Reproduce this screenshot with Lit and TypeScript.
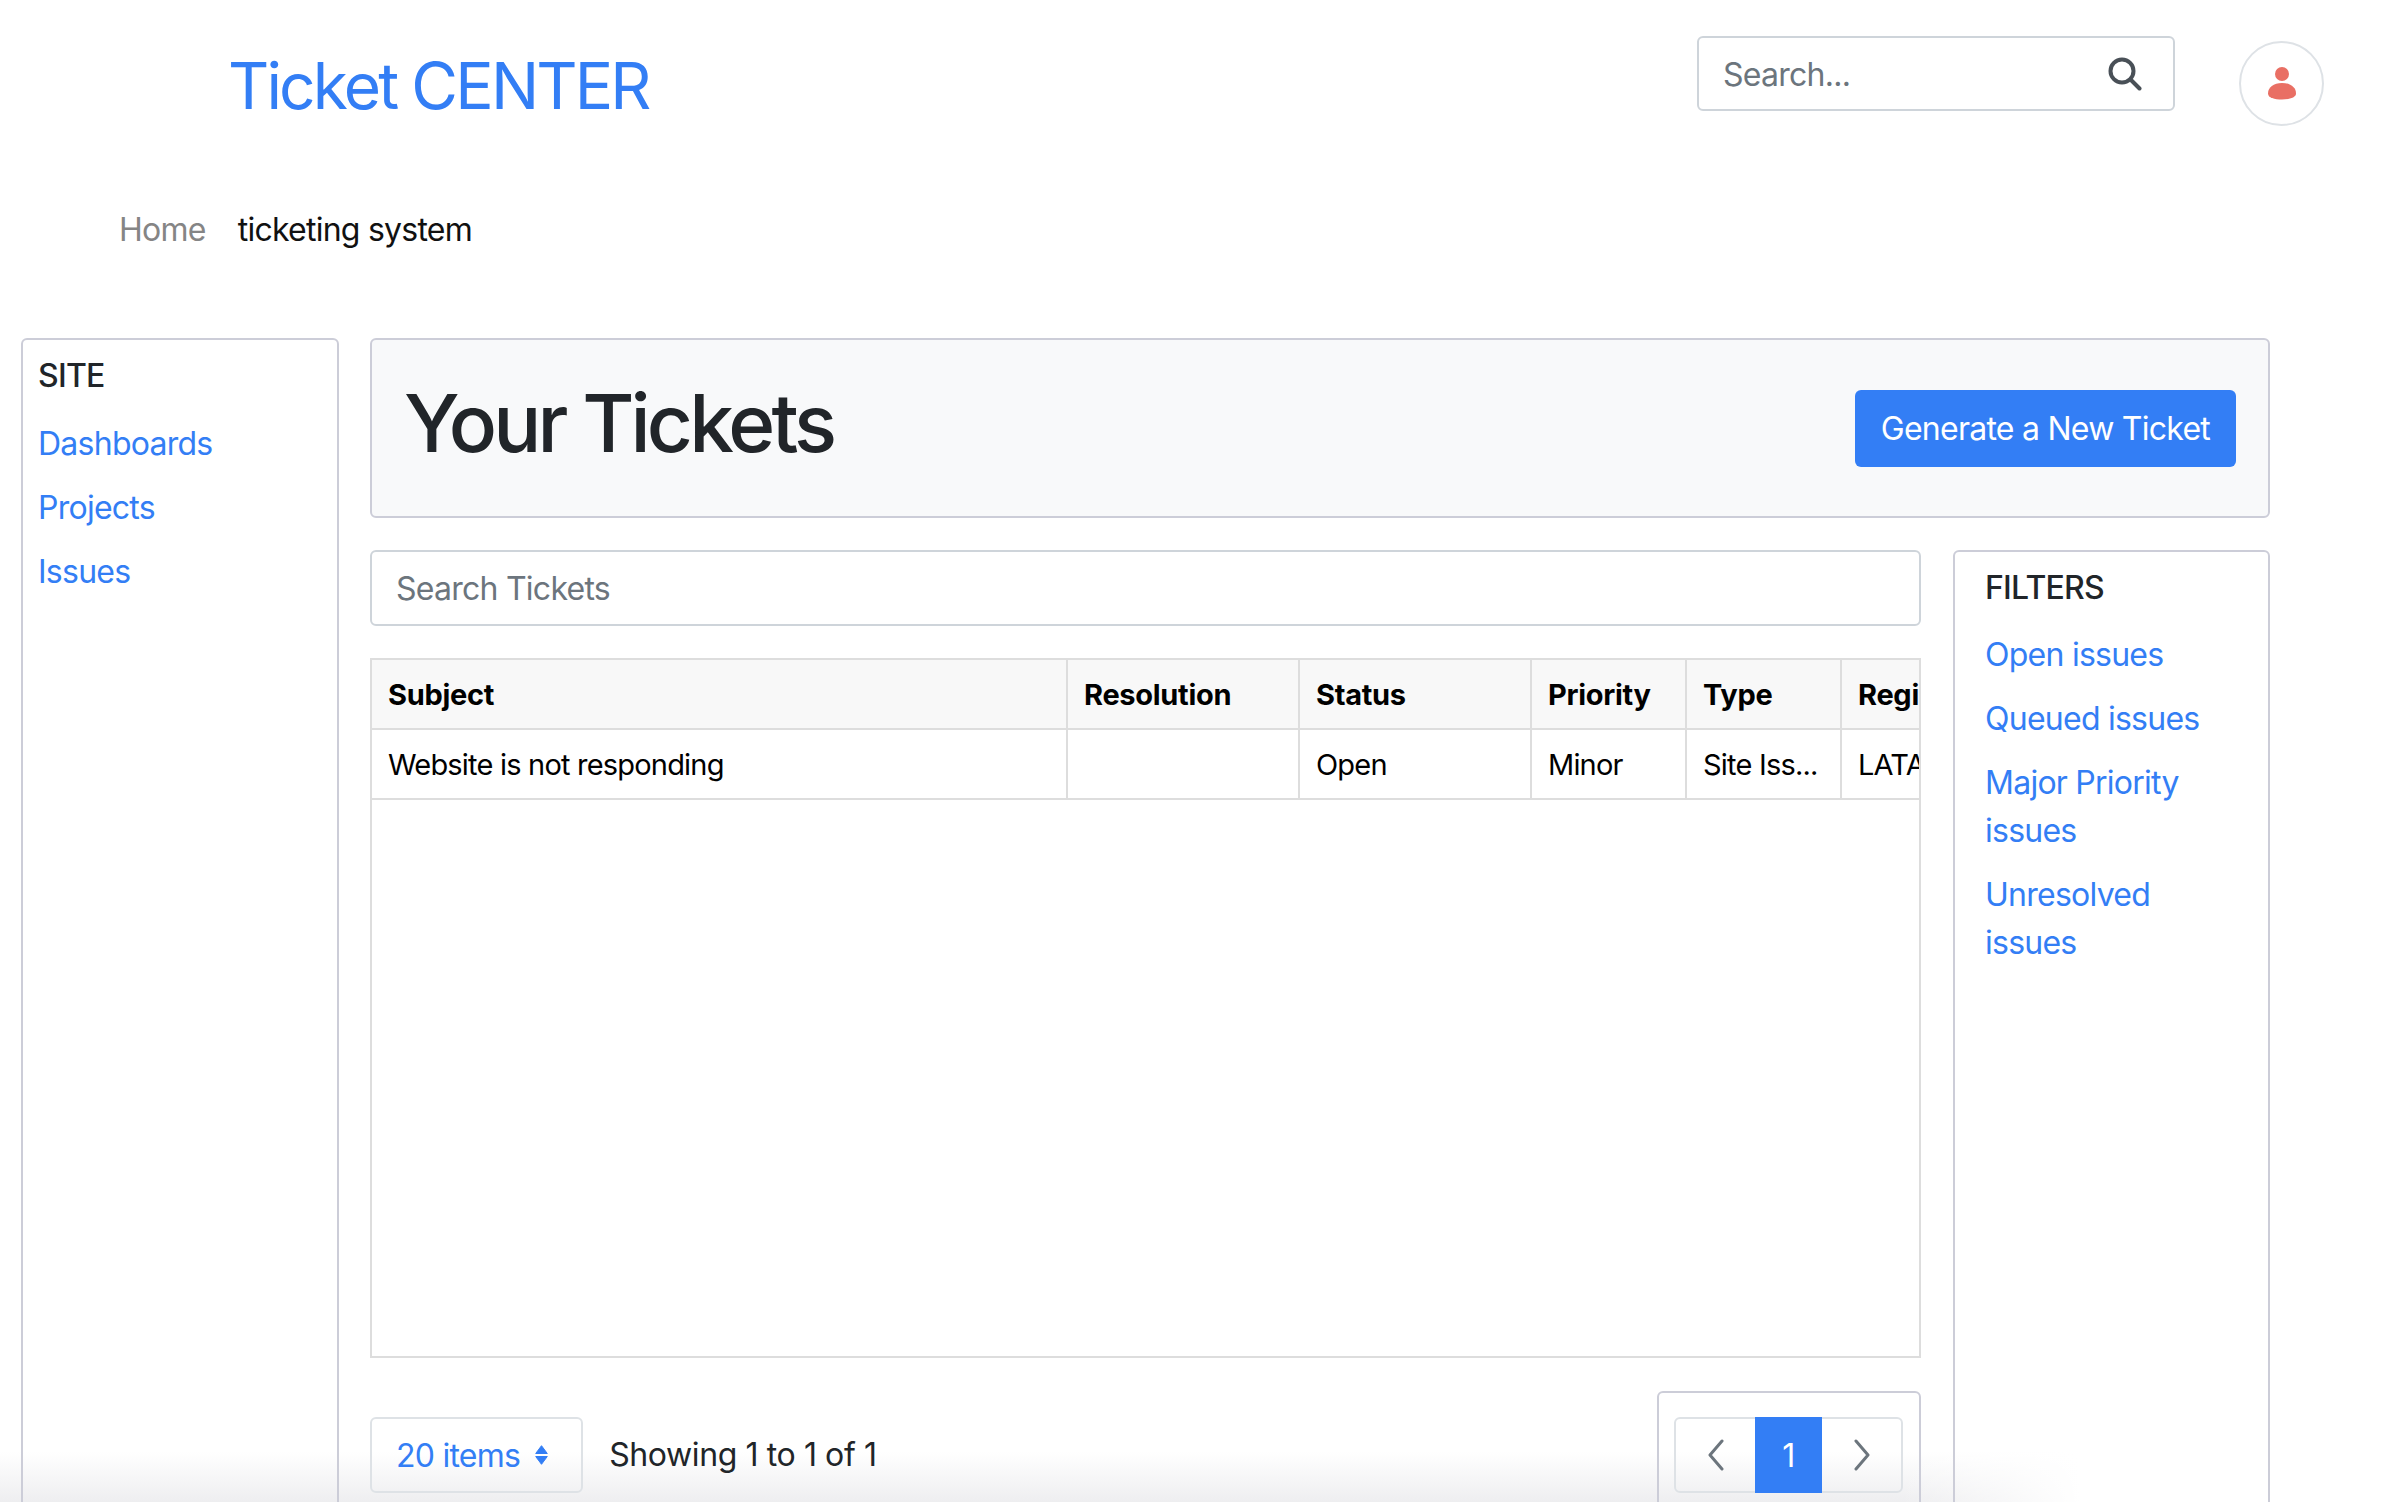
import {LitElement, html, css} from 'lit';
import {customElement} from 'lit/decorators.js';

const COLUMNS = [
  {label: 'Subject', value: 'Website is not responding', width: 696},
  {label: 'Resolution', value: '', width: 232},
  {label: 'Status', value: 'Open', width: 232},
  {label: 'Priority', value: 'Minor', width: 155},
  {label: 'Type', value: 'Site Iss...', width: 155},
  {label: 'Region', value: 'LATAM', width: 155},
];

@customElement('app-root')
class AppRoot extends LitElement {
  static styles = css`
    :host {
      display: block;
      height: 1502px;
      overflow: hidden;
      /* faint shadow along the bottom, behind the content, gone towards the right */
      background:
        linear-gradient(90deg, rgba(255, 255, 255, 0) 1900px, #fff 2080px) bottom / 100% 50px no-repeat,
        linear-gradient(rgba(238, 238, 240, 0), #eeeef0) bottom / 100% 50px no-repeat,
        #fff;
      color: #212529;
      font-family: Inter, "Noto Sans", sans-serif;
      font-size: 32px;
      letter-spacing: -0.75px;
    }

    a {
      color: #337ef5;
      text-decoration: none;
    }

    .top {
      display: flex;
      align-items: flex-start;
      height: 338px;
      box-sizing: border-box;
    }

    .head-left {
      flex: 1;
    }

    .brand {
      display: block;
      margin: 46px 0 0 228px;
      font-size: 64px;
      line-height: 80px;
      letter-spacing: -2.85px;
    }

    .crumbs {
      display: flex;
      gap: 32px;
      margin: 82px 0 0 119px;
      line-height: 43px;
      color: #111;
    }

    .crumbs span:first-child {
      color: #858585;
    }

    .site-search {
      display: flex;
      align-items: center;
      justify-content: space-between;
      box-sizing: border-box;
      width: 478px;
      height: 75px;
      margin: 36px 64px 0 0;
      padding: 2px 31px 0 24px;
      border: 2px solid #ced4da;
      border-radius: 6px;
      color: #6c757d;
    }

    .site-search svg {
      margin-top: -2px;
    }

    .avatar {
      display: flex;
      align-items: center;
      justify-content: center;
      box-sizing: border-box;
      width: 85px;
      height: 85px;
      margin: 41px 80px 0 0;
      border: 2px solid #dee2e6;
      border-radius: 50%;
    }

    .body {
      display: flex;
      gap: 31px;
      padding: 0 134px 0 21px;
    }

    .card {
      box-sizing: border-box;
      border: 2px solid #cccdd8;
      border-radius: 6px;
    }

    .side {
      width: 318px;
      flex: none;
      height: 1300px;
      padding: 16px 15px;
    }

    .side h2,
    .filters h2 {
      margin: 0;
      font-size: 32px;
      font-weight: 500;
      line-height: 40px;
    }

    .side nav,
    .filters nav {
      display: flex;
      flex-direction: column;
      gap: 16px;
      margin-top: 23px;
      line-height: 48px;
    }

    .side nav {
      margin-top: 24px;
    }

    .content {
      flex: 1;
      min-width: 0;
    }

    .title-card {
      display: flex;
      align-items: center;
      justify-content: space-between;
      height: 180px;
      padding: 0 32px;
      background: #f8f9fa;
    }

    h1 {
      margin: 0 0 10px;
      font-size: 80px;
      font-weight: 500;
      letter-spacing: -3.85px;
      line-height: 96px;
    }

    .primary {
      box-sizing: border-box;
      height: 77px;
      margin-top: 0;
      padding: 0 26px;
      border: 0;
      border-radius: 6px;
      background: #337ef5;
      color: #fff;
      font: inherit;
      letter-spacing: inherit;
    }

    .lower {
      display: flex;
      gap: 32px;
      margin-top: 32px;
    }

    .tickets {
      width: 1551px;
      flex: none;
    }

    .ticket-search {
      box-sizing: border-box;
      height: 76px;
      padding: 0 24px;
      line-height: 74px;
      border: 2px solid #ced4da;
      border-radius: 6px;
      color: #6c757d;
    }

    .grid {
      box-sizing: border-box;
      height: 700px;
      margin-top: 32px;
      border: 2px solid #dddddd;
      overflow: hidden;
      background: #fff;
    }

    .grid-row {
      display: flex;
      height: 70px;
      box-sizing: border-box;
      border-bottom: 2px solid #dddddd;
      color: #000;
      font-size: 29px;
      letter-spacing: -0.8px;
    }

    .grid-row.header {
      background: #f8f8f8;
      font-weight: 700;
      letter-spacing: -0.3px;
    }

    .cell {
      flex: none;
      box-sizing: border-box;
      padding: 0 16px;
      line-height: 70px;
      white-space: nowrap;
      overflow: hidden;
      border-right: 2px solid #dddddd;
    }

    .cell:last-child {
      border-right: 0;
    }

    .footer {
      display: flex;
      align-items: flex-start;
      margin-top: 33px;
    }

    .per-page {
      display: flex;
      align-items: center;
      gap: 15px;
      box-sizing: border-box;
      height: 76px;
      margin-top: 26px;
      padding: 0 33px 0 24px;
      border: 2px solid #dee2e6;
      border-radius: 6px;
      color: #337ef5;
    }

    .showing {
      margin: 26px 0 0 26px;
      line-height: 76px;
      letter-spacing: -0.4px;
      flex: 1;
    }

    .pager-wrap {
      padding: 24px 16px 24px 15px;
    }

    .pager {
      display: flex;
      height: 76px;
      box-sizing: border-box;
      border: 2px solid #dee2e6;
      border-radius: 6px;
    }

    .pager div {
      display: flex;
      align-items: center;
      justify-content: center;
      width: 79px;
      color: #6c757d;
    }

    .pager .active {
      width: 67px;
      margin: -2px 0;
      background: #337ef5;
      color: #fff;
    }

    .filters {
      flex: 1;
      height: 1000px;
      padding: 16px 30px;
    }

    .filters a {
      line-height: 48px;
    }
  `;

  render() {
    return html`
      <header class="top">
        <div class="head-left">
          <a class="brand" href="#">Ticket CENTER</a>
          <div class="crumbs"><span>Home</span><span>ticketing system</span></div>
        </div>
        <div class="site-search">
          <span>Search...</span>
          <svg width="34" height="34" viewBox="0 0 34 34" fill="none" stroke="#495057" stroke-width="4">
            <circle cx="14" cy="14" r="11.5"></circle>
            <path d="M22.500 22.500 31.500 31.500" stroke-linecap="round"></path>
          </svg>
        </div>
        <div class="avatar">
          <svg width="28" height="33" viewBox="0 0 28 33" fill="#e96f64">
            <circle cx="14" cy="7" r="7"></circle>
            <path d="M14 16c8.500 0 14 4.500 14 10.500 0 4-6.500 6-14 6s-14-2-14-6C0 20.500 5.500 16 14 16z"></path>
          </svg>
        </div>
      </header>
      <div class="body">
        <aside class="card side">
          <h2>SITE</h2>
          <nav>
            <a href="#">Dashboards</a>
            <a href="#">Projects</a>
            <a href="#">Issues</a>
          </nav>
        </aside>
        <main class="content">
          <section class="card title-card">
            <h1>Your Tickets</h1>
            <button class="primary">Generate a New Ticket</button>
          </section>
          <div class="lower">
            <section class="tickets">
              <div class="ticket-search">Search Tickets</div>
              <div class="grid">
                <div class="grid-row header">
                  ${COLUMNS.map((c) => html`<div class="cell" style="width:${c.width}px">${c.label}</div>`)}
                </div>
                <div class="grid-row">
                  ${COLUMNS.map((c) => html`<div class="cell" style="width:${c.width}px">${c.value}</div>`)}
                </div>
              </div>
              <div class="footer">
                <div class="per-page">
                  20 items
                  <svg width="13" height="20" viewBox="0 0 13 20" fill="#337ef5" stroke="#337ef5" stroke-width="1" stroke-linejoin="round">
                    <path d="M6.500 .7 12.300 8.500H.7zM6.500 19.300.7 11.500H12.300z"></path>
                  </svg>
                </div>
                <div class="showing">Showing 1 to 1 of 1</div>
                <div class="card pager-wrap">
                  <div class="pager">
                    <div>
                      <svg width="20" height="32" viewBox="0 0 20 32" fill="none" stroke="#6c757d" stroke-width="3" stroke-linecap="round" stroke-linejoin="round">
                        <path d="M16 2 4 16l12 14"></path>
                      </svg>
                    </div>
                    <div class="active">1</div>
                    <div>
                      <svg width="20" height="32" viewBox="0 0 20 32" fill="none" stroke="#6c757d" stroke-width="3" stroke-linecap="round" stroke-linejoin="round">
                        <path d="m4 2 12 14L4 30"></path>
                      </svg>
                    </div>
                  </div>
                </div>
              </div>
            </section>
            <aside class="card filters">
              <h2>FILTERS</h2>
              <nav>
                <a href="#">Open issues</a>
                <a href="#">Queued issues</a>
                <a href="#">Major Priority issues</a>
                <a href="#">Unresolved issues</a>
              </nav>
            </aside>
          </div>
        </main>
      </div>
    `;
  }
}
